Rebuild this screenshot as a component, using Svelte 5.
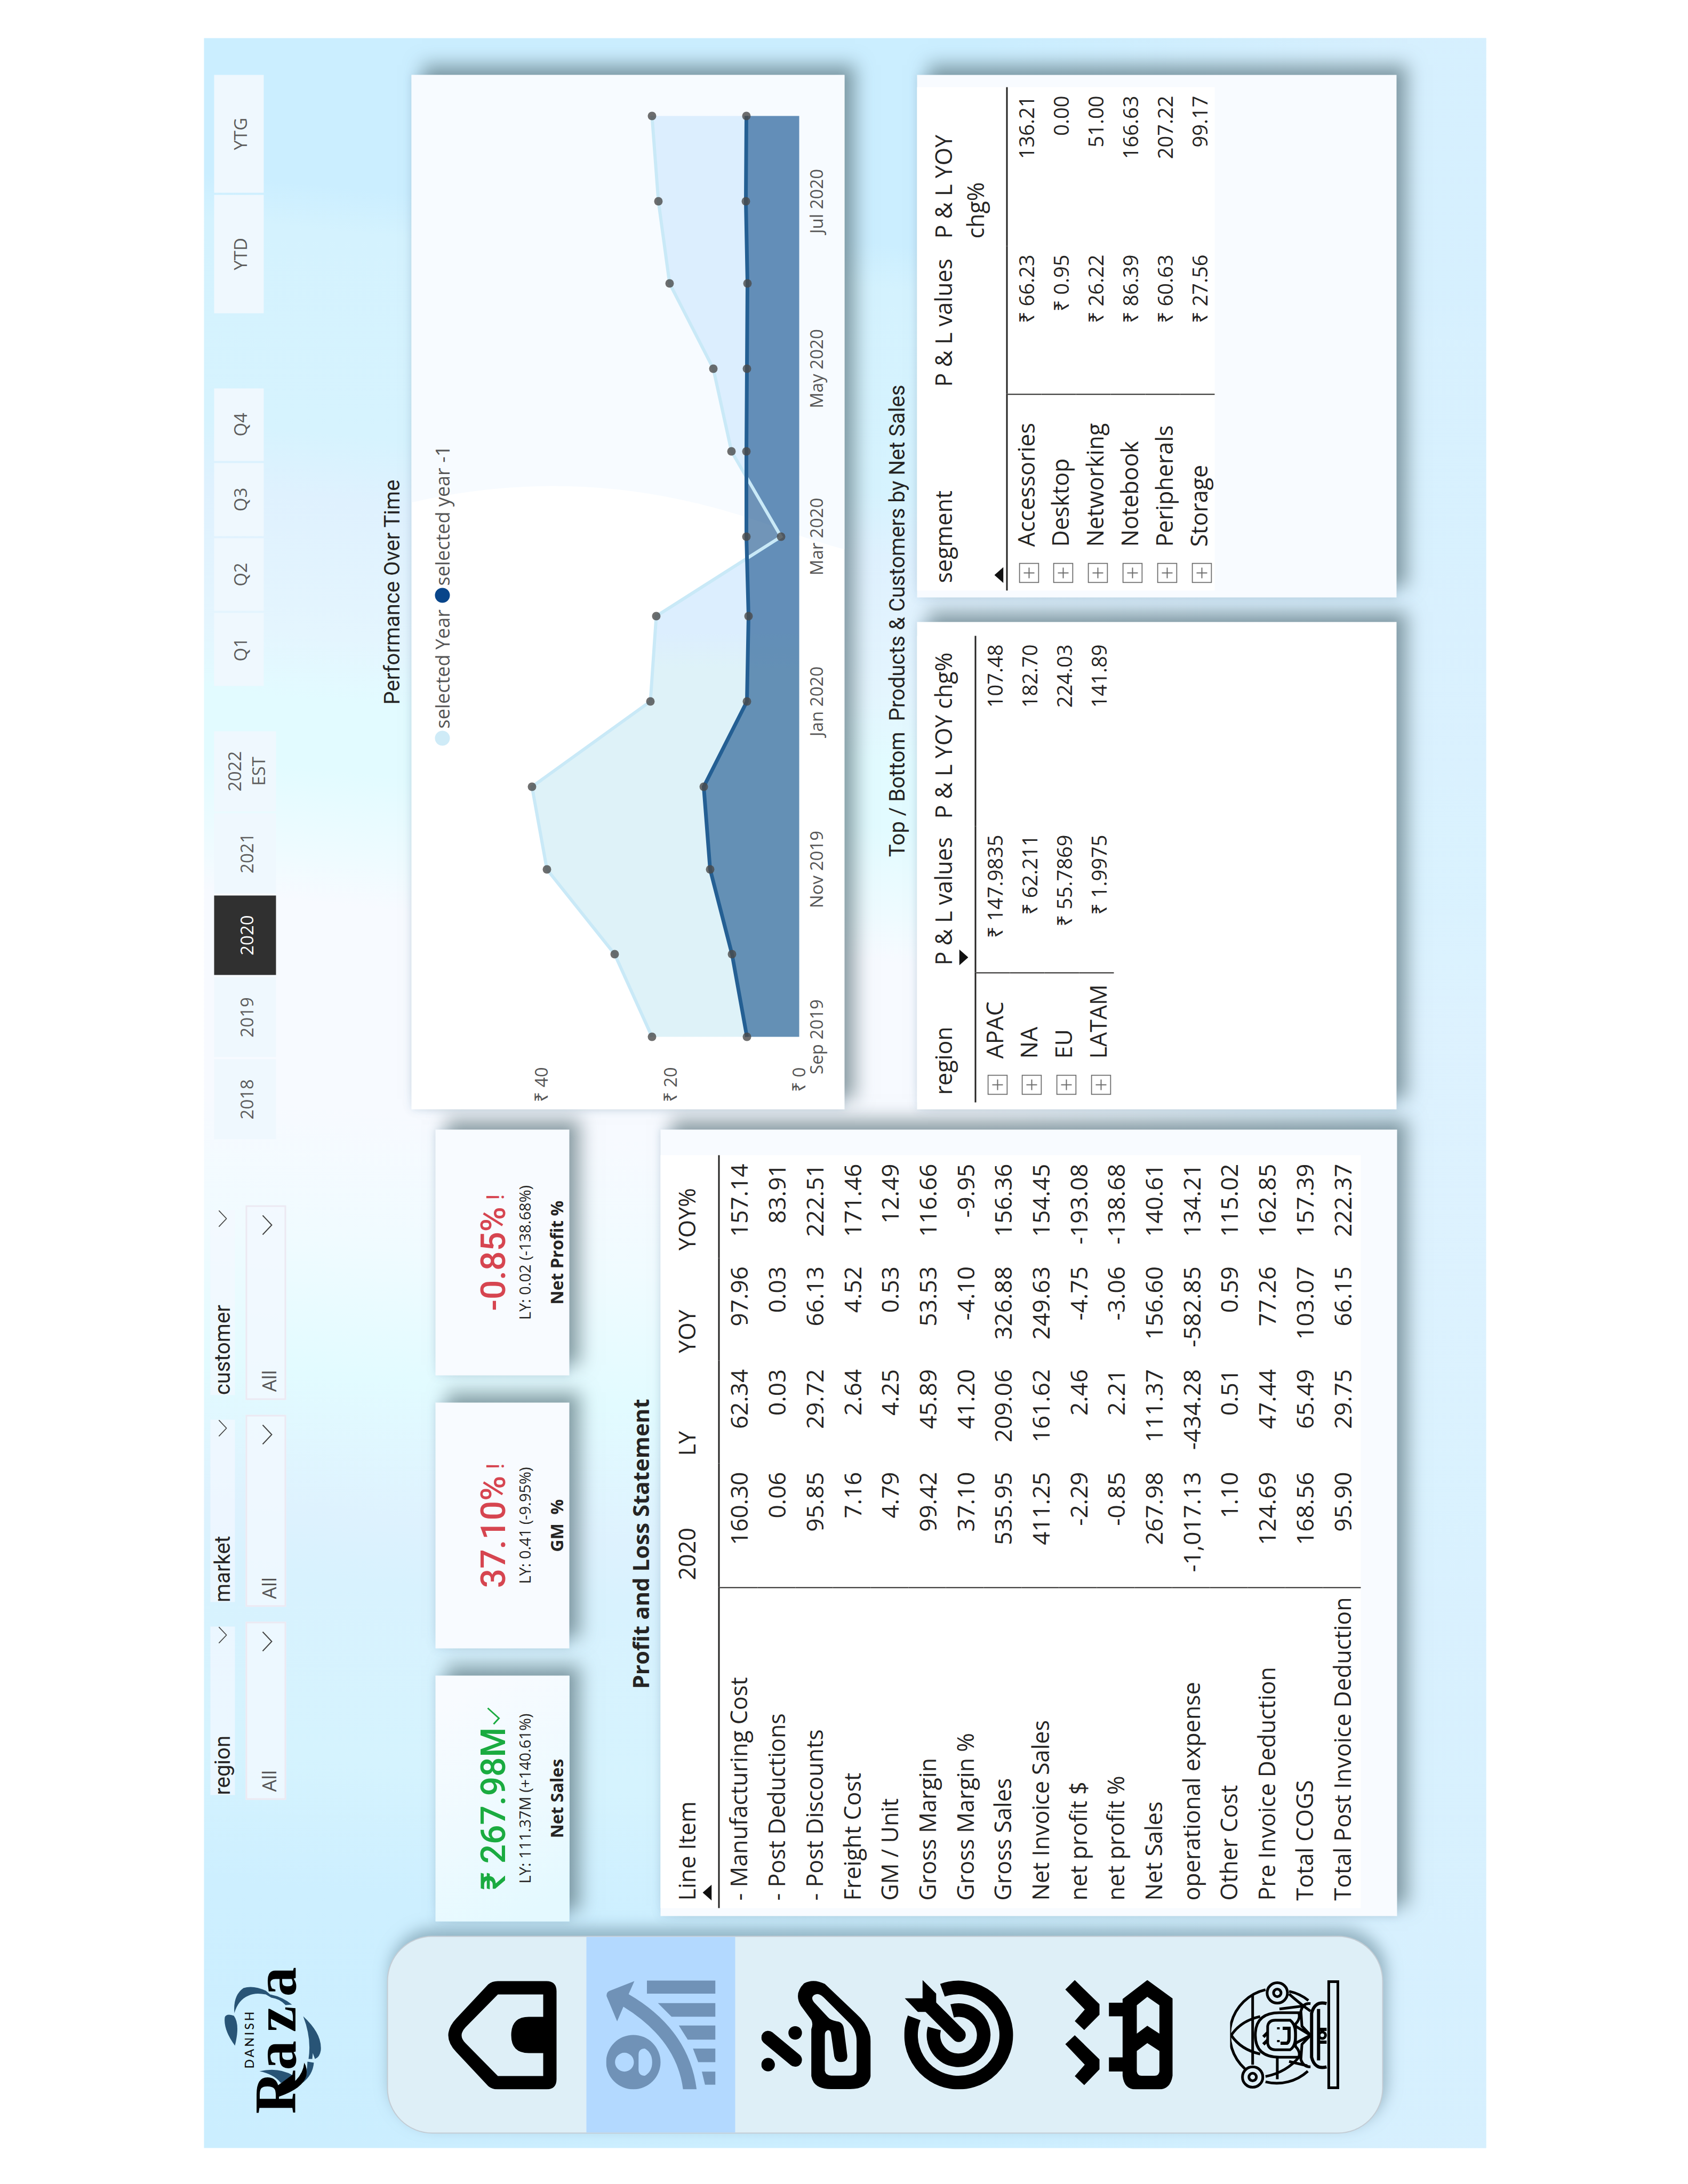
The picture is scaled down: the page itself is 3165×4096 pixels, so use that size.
<script>
  const slicers = ['region', 'market', 'customer'];
  const years = ['2018', '2019', '2020', '2021', '2022 EST'];
  const quarters = ['Q1', 'Q2', 'Q3', 'Q4'];
  const periods = ['YTD', 'YTG'];
  let year = $state('2020');

  const kpis = [
    { value: '₹ 267.98M', good: true, note: 'LY: 111.37M (+140.61%)', name: 'Net Sales' },
    { value: '37.10%', good: false, note: 'LY: 0.41 (-9.95%)', name: 'GM \u00a0%' },
    { value: '-0.85%', good: false, note: 'LY: 0.02 (-138.68%)', name: 'Net Profit %' },
  ];

  const lines = [
    ['- Manufacturing Cost', '160.30', '62.34', '97.96', '157.14'],
    ['- Post Deductions', '0.06', '0.03', '0.03', '83.91'],
    ['- Post Discounts', '95.85', '29.72', '66.13', '222.51'],
    ['Freight Cost', '7.16', '2.64', '4.52', '171.46'],
    ['GM / Unit', '4.79', '4.25', '0.53', '12.49'],
    ['Gross Margin', '99.42', '45.89', '53.53', '116.66'],
    ['Gross Margin %', '37.10', '41.20', '-4.10', '-9.95'],
    ['Gross Sales', '535.95', '209.06', '326.88', '156.36'],
    ['Net Invoice Sales', '411.25', '161.62', '249.63', '154.45'],
    ['net profit $', '-2.29', '2.46', '-4.75', '-193.08'],
    ['net profit %', '-0.85', '2.21', '-3.06', '-138.68'],
    ['Net Sales', '267.98', '111.37', '156.60', '140.61'],
    ['operational expense', '-1,017.13', '-434.28', '-582.85', '134.21'],
    ['Other Cost', '1.10', '0.51', '0.59', '115.02'],
    ['Pre Invoice Deduction', '124.69', '47.44', '77.26', '162.85'],
    ['Total COGS', '168.56', '65.49', '103.07', '157.39'],
    ['Total Post Invoice Deduction', '95.90', '29.75', '66.15', '222.37'],
  ];

  const regions = [
    ['APAC', '₹ 147.9835', '107.48'],
    ['NA', '₹ 62.211', '182.70'],
    ['EU', '₹ 55.7869', '224.03'],
    ['LATAM', '₹ 1.9975', '141.89'],
  ];
  const segments = [
    ['Accessories', '₹ 66.23', '136.21'],
    ['Desktop', '₹ 0.95', '0.00'],
    ['Networking', '₹ 26.22', '51.00'],
    ['Notebook', '₹ 86.39', '166.63'],
    ['Peripherals', '₹ 60.63', '207.22'],
    ['Storage', '₹ 27.56', '99.17'],
  ];

  const days = [0, 30, 61, 91, 122, 153, 182, 213, 243, 274, 304, 335];
  const current = [22.9, 28.7, 39.2, 41.5, 23.1, 22.2, 2.8, 10.5, 13.3, 20.1, 21.9, 22.9];
  const previous = [8.1, 10.4, 13.8, 14.8, 8.1, 7.9, 8.2, 8.2, 8.1, 8, 8.3, 8.2];
  const px = (d) => Math.round(136 + (d / 335) * 1727);
  const py = (v) => Math.round(727 - v * 12.07);
  const pts = (s) => s.map((v, i) => `${px(days[i])},${py(v)}`).join(' ');
  const area = (s) => `${px(0)},727 ${pts(s)} ${px(335)},727`;
  const ticksX = [
    ['Sep 2019', 0], ['Nov 2019', 61], ['Jan 2020', 122],
    ['Mar 2020', 182], ['May 2020', 243], ['Jul 2020', 304],
  ];
</script>

{#snippet chevron()}
  <svg class="chevron" viewBox="0 0 38 20" aria-hidden="true"><path d="M1 1L19 18L37 1" fill="none" stroke="currentColor" stroke-width="2" /></svg>
{/snippet}

{#snippet matrix(name, heads, rows, sortCol, up)}
  <table class="matrix {name}">
    <colgroup><col class="c1" /><col class="c2" /><col class="c3" /></colgroup>
    <thead>
      <tr>
        {#each heads as h, i}
          <th scope="col">
            {h}
            {#if i === sortCol}
              <svg class="sort" class:low={up} viewBox="0 0 30 17" aria-hidden="true"><path d={up ? 'M0 17L15 0L30 17Z' : 'M0 0L15 17L30 0Z'} /></svg>
            {/if}
          </th>
        {/each}
      </tr>
    </thead>
    <tbody>
      {#each rows as r}
        <tr>
          <th scope="row">
            <span class="rowhead">
              <button class="plus" aria-label="Expand {r[0]}">
                <svg viewBox="0 0 38 38" aria-hidden="true"><path d="M1 1H37V37H1ZM19 9V29M9 19H29" fill="none" stroke="#6b6b6b" stroke-width="2" /></svg>
              </button>
              {r[0]}
            </span>
          </th>
          <td>{r[1]}</td>
          <td>{r[2]}</td>
        </tr>
      {/each}
    </tbody>
  </table>
{/snippet}

<div class="sheet">
  <div class="dash">
    <aside>
      <svg class="logo" viewBox="60 32 290 196" role="img" aria-label="Danish Raza">
        <g fill="#285476">
          <path d="M144 104Q152 140 136 167Q126 160 122 144Q138 132 144 104Z" />
          <path d="M253 57Q286 54 300 74Q306 92 295 116L288 124Q284 146 269 165L268 153Q280 142 282 126L288 116Q292 96 286 84Q278 64 253 57Z" />
          <path d="M192 58Q222 36 245 39Q253 42 248 56Q232 68 192 58Z" />
          <path d="M247 186Q214 222 183 219Q170 217 167 208L178 204L167 203V196Q206 202 247 186Z" />
          <path d="M162 194L160 206Q136 204 121 183Q140 194 162 194Z" />
        </g>
        <path d="M105 134Q122 184 160 188Q150 194 136 192Q112 186 96 140Z" fill="#000" />
        <g class="raza">
          <text x="64" y="171">R</text><text x="146" y="171">a</text><text x="217" y="171">z</text><text x="284" y="171">a</text>
        </g>
        <text class="danish" x="149" y="93">DANISH</text>
      </svg>

      <nav aria-label="Pages">
        <a href="#home" aria-label="Home">
          <svg viewBox="0 0 205 205" aria-hidden="true"><path fill-rule="evenodd" d="M0 185V94Q0 83 6 76L70 16Q101 -14 133 16L197 76Q203 83 203 94V185Q203 204 184 204H19Q0 204 0 185ZM25 179V94L87 33Q101 19 116 33L178 94V179H136V152Q136 119 101.5 119Q68 119 68 152V179Z" /></svg>
        </a>
        <a href="#finance" class="active" aria-label="Finance" aria-current="page">
          <svg viewBox="0 0 209 209" aria-hidden="true"><path fill-rule="evenodd" d="M183 78H208V209H183ZM165 99V209H139V125ZM122 139V209H95V156ZM78 166V209H52V176ZM34 183V209H9V189ZM52 0A52 52 0 1 1 52 104A52 52 0 1 1 52 0ZM52 17A18 18 0 1 0 52 53A18 18 0 1 0 52 17ZM26 74Q26 62 38 62H66Q78 62 78 74Q70 88 52 88Q34 88 26 74ZM0 147Q95 135 158 33L130 21L178 1Q185 0 188 6L207 54L182 43Q115 158 0 173Z" /></svg>
        </a>
        <a href="#sales" aria-label="Sales">
          <svg viewBox="0 0 209 210" aria-hidden="true">
            <circle cx="47" cy="13" r="13" /><circle cx="108" cy="65" r="13" />
            <path d="M99 13L56 65" fill="none" stroke="#000" stroke-width="26" stroke-linecap="round" />
            <path fill-rule="evenodd" d="M25 96H115Q125 100 133 96L160 76Q183 62 203 82Q213 100 202 122L145 182Q120 210 92 210H25Q0 205 0 170V134Q0 100 25 96ZM104 122H35Q26 124 26 134V170Q26 183 37 183H92Q112 183 126 170L176 120Q186 110 181 102Q176 94 167 101L138 128Q133 132 130 145Q129 158 112 159L65 165Q52 166 52 153Q52 142 63 140L106 134Q114 133 113 127Q111 122 104 122Z" />
          </svg>
        </a>
        <a href="#marketing" aria-label="Marketing">
          <svg viewBox="0 0 209 209" aria-hidden="true">
            <path d="M189.500 73A91 91 0 1 1 136.600 19M150 91.600A48 48 0 1 1 116.400 57.600" fill="none" stroke="#000" stroke-width="26" />
            <path d="M104 104L158 50" fill="none" stroke="#000" stroke-width="27" stroke-linecap="round" />
            <path d="M174 1V35H209L183 61H160L148 50V26Z" />
          </svg>
        </a>
        <a href="#supply" aria-label="Supply chain">
          <svg viewBox="0 0 208 204" aria-hidden="true">
            <path fill-rule="evenodd" d="M208 18L190 0L152 37L130 18L113 36L142 65H162ZM103 18L86 0L47 37L25 18L8 36L38 65H57ZM34 83H61V109H139V83H165V109H172L208 156L173 204H26Q0 200 0 178V134Q0 112 26 109H34ZM34 136Q26 137 26 145V170Q26 178 34 179H73L88 156L73 136ZM106 136L121 156L106 179H160L176 156L160 136Z" />
          </svg>
        </a>
        <a href="#executive" aria-label="Executive view">
          <svg viewBox="0 0 204 204" aria-hidden="true">
            <g fill="none" stroke="#000" stroke-width="5">
              <path d="M34 145A86 86 0 0 1 14 66M38 28A86 86 0 0 1 186 66M183 110A86 86 0 0 1 166 146" />
              <path d="M46 42H176M19 88H60M101 2Q74 20 66 56M101 2Q128 20 136 56M178 110Q160 130 146 150M24 66Q32 106 62 130" />
              <circle cx="180" cy="88" r="19" fill="#deeff7" /><circle cx="180" cy="88" r="7" />
              <circle cx="23" cy="42" r="19" fill="#deeff7" /><circle cx="23" cy="42" r="7" />
              <path d="M60 128V92Q60 47 101 47Q143 47 143 92V128Q132 132 122 122H80Q70 132 60 128Z" fill="#deeff7" />
              <path d="M74 112V84Q74 72 86 70H118Q129 72 129 84V112Q122 122 101 122Q80 122 74 112Z" />
              <path d="M86 94V106Q88 110 96 110H114V98M84 62L92 70M98 62L106 70" stroke-width="6" />
              <path d="M88 90H92M112 90H116" />
              <path d="M86 122L101 150L118 122M101 150L84 134L56 132Q42 136 42 150M101 150L118 134L146 132Q162 136 160 150M52 110L44 144M150 92L156 140" />
              <path d="M42 180Q36 158 60 152H142Q166 158 160 180M54 165H150M88 165V180M112 165V180" stroke-width="6" />
              <circle cx="101" cy="172" r="6" />
              <path d="M3 184H201V201H3Z" />
            </g>
          </svg>
        </a>
      </nav>
    </aside>

    <main>
      <header>
        <div class="slicers">
          {#each slicers as s}
            <div class="slicer">
              <div class="cap"><label for="f-{s}">{s}</label>{@render chevron()}</div>
              <div class="box">
                <select id="f-{s}"><option>All</option></select>
                {@render chevron()}
              </div>
            </div>
          {/each}
        </div>
        <div class="tiles years" role="group" aria-label="Year">
          {#each years as y}
            <button class:on={year === y} aria-pressed={year === y} onclick={() => (year = y)}>{y}</button>
          {/each}
        </div>
        <div class="tiles quarters" role="group" aria-label="Quarter">
          {#each quarters as q}<button>{q}</button>{/each}
        </div>
        <div class="tiles periods" role="group" aria-label="Period">
          {#each periods as p}<button>{p}</button>{/each}
        </div>
      </header>

      <div class="body">
        <div class="left">
          <div class="kpis">
            {#each kpis as k}
              <section class="card kpi" class:good={k.good}>
                <p class="value">
                  <span>{k.value}</span>{#if k.good}<svg viewBox="0 0 34 26" aria-hidden="true"><path d="M2 13L13 23L32 2" fill="none" stroke="currentColor" stroke-width="3" /></svg>{:else}<span class="bang">!</span>{/if}
                </p>
                <p class="note">{k.note}</p>
                <h3>{k.name}</h3>
              </section>
            {/each}
          </div>
          <h2 class="pl-title">Profit and Loss Statement</h2>
          <section class="card pl">
            <table>
              <colgroup><col class="p1" /><col class="p2" /><col class="p3" /><col class="p3" /><col class="p3" /></colgroup>
              <thead>
                <tr>
                  <th scope="col">Line Item <svg class="sort" viewBox="0 0 30 17" aria-hidden="true"><path d="M0 17L15 0L30 17Z" /></svg></th>
                  <th scope="col">2020</th><th scope="col">LY</th><th scope="col">YOY</th><th scope="col">YOY%</th>
                </tr>
              </thead>
              <tbody>
                {#each lines as l}
                  <tr>
                    <th scope="row">{l[0]}</th>
                    {#each l.slice(1) as c}<td>{c}</td>{/each}
                  </tr>
                {/each}
              </tbody>
            </table>
          </section>
        </div>

        <div class="right">
          <h2 class="chart-title">Performance Over Time</h2>
          <section class="card chart">
            <svg viewBox="0 0 1940 812" role="img" aria-label="Performance over time">
              <defs>
                <linearGradient id="tone">
                  <stop offset="0.4" stop-color="#def2f8" /><stop offset="0.44" stop-color="#dceefe" />
                </linearGradient>
              </defs>
              <path d="M1138 0Q1215 330 1100 660Q1070 740 1050 812H1940V0Z" fill="#f7fbff" />
              <polygon points={area(current)} fill="url(#tone)" />
              <polygon points={area(previous)} fill="#124f88" fill-opacity="0.6" />
              <polyline points={pts(current)} fill="none" stroke="#c9e9f7" stroke-width="6" />
              <polyline points={pts(previous)} fill="none" stroke="#245f93" stroke-width="7" />
              {#each days as d, i}
                <circle class="dot" cx={px(d)} cy={py(current[i])} r="8" />
                <circle class="dot" cx={px(d)} cy={py(previous[i])} r="8" />
              {/each}
              <circle cx="696" cy="58" r="14" fill="#cfebf7" /><text class="legend" x="714" y="71">selected Year</text>
              <circle cx="964" cy="58" r="14" fill="#08458a" /><text class="legend" x="982" y="71">selected year -1</text>
              {#each [0, 20, 40] as v}<text class="tick end" x="79" y={py(v) + 11}>₹ {v}</text>{/each}
              {#each ticksX as t}<text class="tick mid" x={px(t[1])} y="771">{t[0]}</text>{/each}
            </svg>
          </section>
          <h2 class="top-title">Top / Bottom &nbsp;Products &amp; Customers by Net Sales</h2>
          <div class="pair">
            <section class="card region-card">{@render matrix('by-region', ['region', 'P & L values', 'P & L YOY chg%'], regions, 1, false)}</section>
            <section class="card segment-card">{@render matrix('by-segment', ['segment', 'P & L values', 'P & L YOY chg%'], segments, 0, true)}</section>
          </div>
        </div>
      </div>
    </main>
  </div>
</div>

<style>
  :global(body) { background: #fff; }
  * { box-sizing: border-box; margin: 0; }
  .sheet {
    display: grid;
    grid-template: 100% / 100%;
    place-items: center;
    height: 100vh;
    overflow: hidden;
    padding: 4px 0 0 4px;
    font-family: 'Open Sans', 'Noto Sans', sans-serif;
    color: #252423;
  }
  /* Landscape report turned a quarter to the left on a portrait sheet */
  .dash {
    display: grid;
    grid-template-columns: 425px 1fr;
    flex: none;
    width: calc(100vh - 139px);
    height: calc(100vw - 761px);
    transform: rotate(-90deg);
    background:
      linear-gradient(to bottom, rgba(216, 241, 254, 0) 60%, rgba(216, 240, 254, 0.85) 92%),
      linear-gradient(96deg, #cbeeff 0%, #cdefff 12%, #d5f3fe 18%, #d8f2fe 26%, #def2fe 29%, #e2fbff 35%, #f0fbff 41%, #f7faff 47%, #f7faff 56%, #effbff 58%, #e2fbff 62%, #e2fbff 65%, #e4f5fe 68%, #dff1fe 74%, #d6f3fe 77%, #d4f2fe 86%, #cbeeff 88%);
  }
  button, select { font: inherit; color: inherit; border: 0; cursor: pointer; }
  h2, h3, th { font-weight: 400; }

  .logo { display: block; width: 290px; margin: 32px 0 115px 60px; }
  .raza { font: bold 111px 'Liberation Serif', serif; fill: #000; }
  .danish { font: 500 23px 'Lato', sans-serif; letter-spacing: 4px; fill: #111; }

  nav {
    display: grid;
    grid-template-rows: 316fr 279fr 303fr 232fr 368fr 254fr;
    width: 371px;
    height: 1868px;
    margin-left: 27px;
    padding: 56px 0;
    border: 2px solid #c3ccd4;
    border-radius: 85px;
    background: #deeff7;
    box-shadow: 14px 6px 28px rgba(95, 130, 145, 0.55);
  }
  nav a { display: grid; place-items: center; }
  nav svg { width: 205px; height: 205px; }
  .active { background: #b3d9ff; }
  .active svg { fill: #7092b7; }

  main { display: flex; flex-direction: column; padding-right: 69px; min-width: 0; }
  header { display: flex; align-items: flex-start; padding: 12px 0 0 228px; height: 154px; }
  .slicers { display: grid; grid-template-columns: 334fr 361fr 365fr; gap: 28px; flex: 1116; }
  .cap {
    display: flex;
    align-items: center;
    justify-content: space-between;
    height: 46px;
    margin: 0 9px 20px;
    font: 400 40px/46px 'Roboto', sans-serif;
    background: rgba(243, 248, 255, 0.7);
  }
  .cap .chevron { width: 32px; }
  .box { position: relative; }
  select {
    appearance: none;
    width: 100%;
    height: 76px;
    padding: 10px 12px 0;
    font-size: 36px;
    color: #555;
    background: rgba(243, 249, 255, 0.8);
    border: 3px solid #ece9f2;
  }
  .chevron { display: block; width: 38px; color: #444; }
  .box .chevron { position: absolute; right: 18px; top: 31px; pointer-events: none; }
  .tiles { display: grid; grid-auto-flow: column; grid-auto-columns: 1fr; gap: 4px; margin-top: 7px; }
  .tiles button { padding: 4px 30px 0; font-size: 33px; line-height: 45px; color: #5c5c5c; background: #eff8fe; }
  .tiles .on { background: #303030; color: #fff; }
  .years { flex: 766; height: 116px; margin-left: 124px; }
  .years button { padding: 4px 24px 0; }
  .quarters { flex: 559; height: 93px; margin-left: 85px; }
  .periods { flex: 447; height: 93px; margin-left: 141px; }

  .body { display: grid; grid-template-columns: 1485fr 1940fr; gap: 38px; }
  .card { background: #f8fbff; box-shadow: 20px 20px 32px rgba(80, 105, 112, 0.6), 0 0 14px rgba(120, 160, 190, 0.25); }
  .left { padding-top: 280px; }
  .kpis { display: grid; grid-template-columns: 1fr 1fr 1fr; gap: 51px; height: 251px; }
  .kpi { display: flex; flex-direction: column; align-items: center; padding-top: 71px; }
  .kpi.good { background: linear-gradient(60deg, #e4f9ff 10%, #eefaff 45%, #f8fbff 90%); }
  .value { display: flex; align-items: center; gap: 4px; font: 500 64px/76px 'Roboto', sans-serif; color: #d64550; white-space: pre; }
  .good .value { color: #1aab40; }
  .value svg { width: 34px; }
  .bang { font-size: 46px; line-height: 60px; font-weight: 400; padding: 6px 0 0 8px; }
  .note { font-size: 29px; line-height: 40px; margin-bottom: 18px; white-space: nowrap; }
  .kpi h3 { font-size: 32px; line-height: 44px; font-weight: 700; }
  .pl-title { margin: 103px 0 8px 436px; font-size: 42px; line-height: 60px; font-weight: 700; }
  .pl { height: 1381px; margin-left: 10px; padding: 0 48px 0 15px; }

  table { width: 100%; table-layout: fixed; border-collapse: collapse; background: #fff; }
  th { text-align: left; padding: 0 0 0 14px; font-size: 43px; line-height: 50px; }
  td { text-align: right; padding: 0 16px 0 0; font-size: 44px; line-height: 50px; white-space: nowrap; }
  thead th { padding-top: 19px; vertical-align: top; line-height: 60px; border-bottom: 3px solid #252423; }
  tbody th { border-right: 2px solid #252423; white-space: nowrap; }
  .sort { display: block; width: 30px; height: 17px; fill: #111; }
  .pl table { height: 1313px; }
  .pl thead tr { height: 109px; }
  .p1 { width: 601px; }
  .p2 { width: 233px; }

  .chart-title, .top-title { font: 400 40px/54px 'Roboto', sans-serif; text-align: center; }
  .chart-title { margin: 172px 0 9px; }
  .chart { background: #fff; }
  .chart svg { display: block; width: 100%; }
  .dot { fill: #4a4a4a; fill-opacity: 0.8; }
  .legend { font-size: 36px; fill: #555; }
  .tick { font-size: 33px; fill: #555; }
  .end { text-anchor: end; }
  .mid { text-anchor: middle; }
  .top-title { margin: 72px 0 10px; padding-right: 108px; }
  .pair { display: grid; grid-template-columns: 914fr 980fr; gap: 46px; height: 899px; }
  .region-card { padding: 0 26px 0 13px; background: #fff; }
  .segment-card { padding: 0 23px 0 13px; }
  .matrix tbody tr { height: 65px; }
  .matrix th { white-space: normal; }
  .matrix td { font-size: 38px; padding-top: 6px; }
  .matrix tbody th { padding-top: 5px; }
  .matrix thead tr { height: 109px; }
  .matrix.by-segment thead tr { height: 168px; }
  .rowhead { display: flex; align-items: center; gap: 30px; }
  .plus { width: 38px; height: 38px; padding: 0; margin-top: 12px; background: none; }
  .plus svg { display: block; width: 38px; height: 38px; }
  .by-region .c1 { width: 243px; }
  .by-region .c2 { width: 275px; }
  .by-segment .c1 { width: 368px; }
  .by-segment .c2 { width: 278px; }
  .low { margin-top: 66px; }
</style>
